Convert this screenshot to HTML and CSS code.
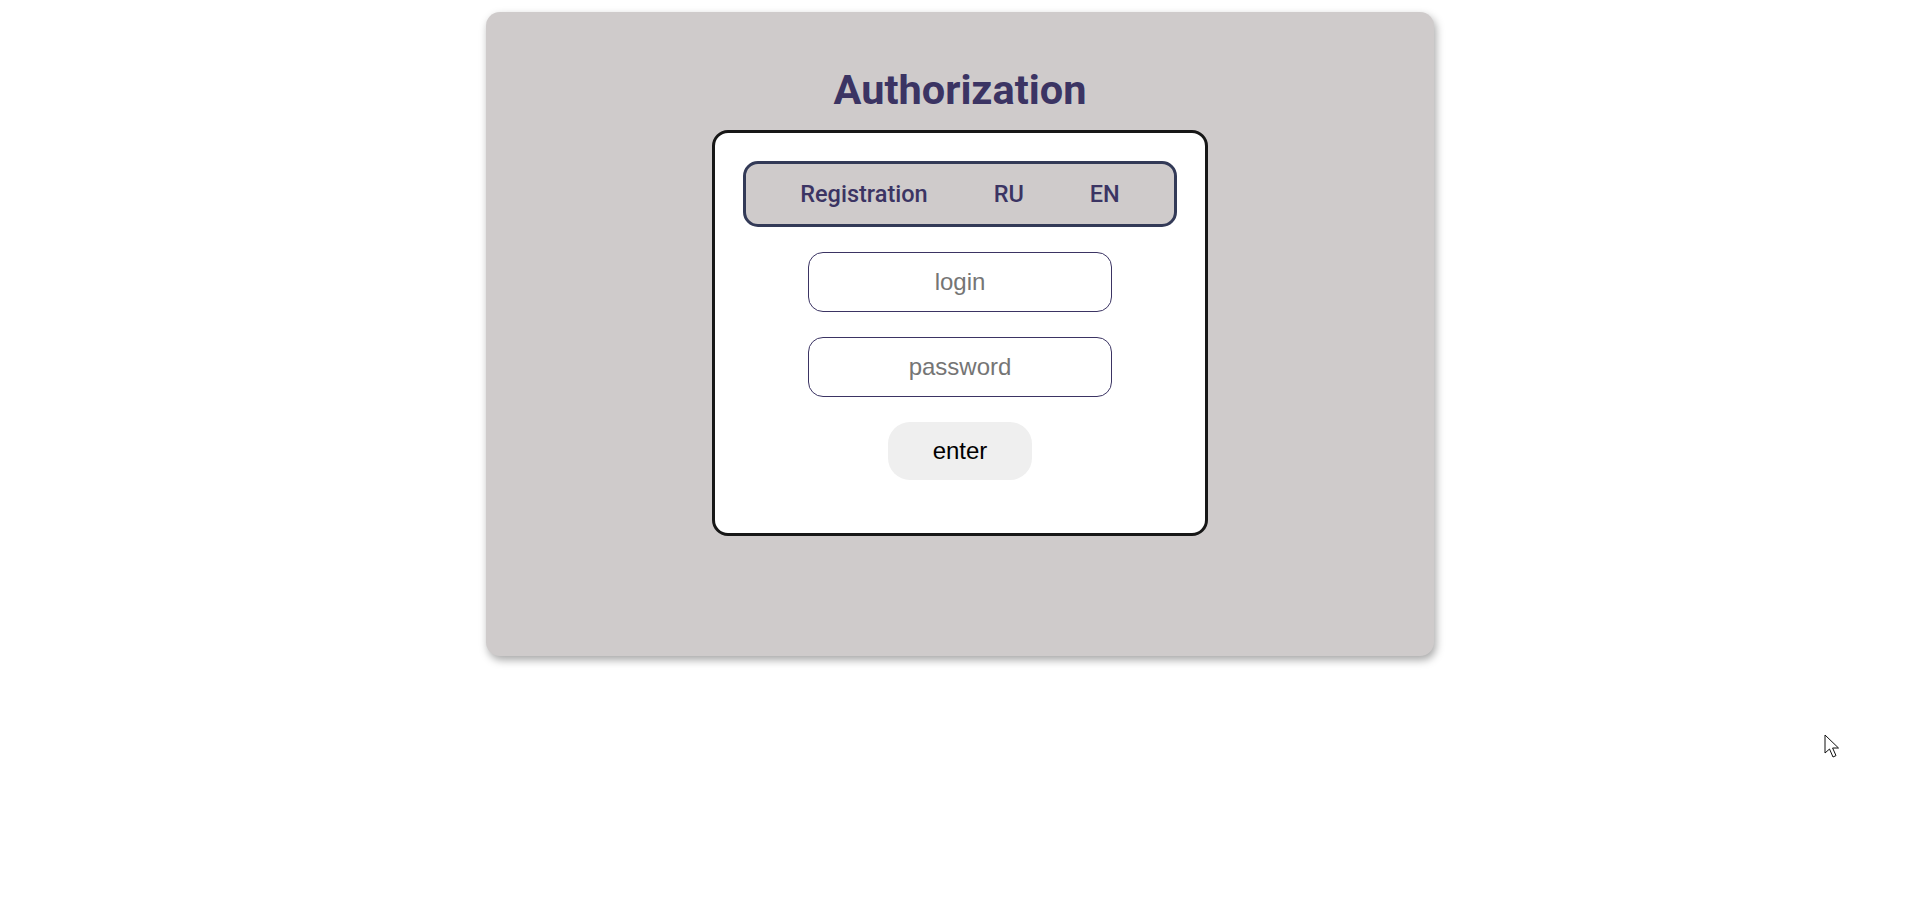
FILE: index.html
```html
<!DOCTYPE html>
<html lang="en">
<head>
<meta charset="utf-8">
<title>Authorization</title>
<link rel="stylesheet" href="styles.css">
</head>
<body>
<main class="card">
  <h1 class="title">Authorization</h1>
  <section class="panel">
    <nav class="nav">
      <a class="nav-item" href="#">Registration</a>
      <a class="nav-item" href="#">RU</a>
      <a class="nav-item" href="#">EN</a>
    </nav>
    <form class="form">
      <input class="field" type="text" placeholder="login">
      <input class="field" type="password" placeholder="password">
      <button class="enter" type="button">enter</button>
    </form>
  </section>
</main>
<svg class="cursor" width="18" height="26" viewBox="0 0 18 26">
  <path d="M1 1 L1 19 L5.5 15 L9 23 L12 21.6 L8.6 14 L14.5 14 Z" fill="#fff" stroke="#111" stroke-width="1" stroke-linejoin="miter"/>
</svg>
</body>
</html>
```
FILE: styles.css
```css
html, body {
  margin: 0;
  padding: 0;
  background: #ffffff;
}
body {
  padding-top: 12px;
  font-family: Roboto, "Liberation Sans", sans-serif;
  min-height: 899px;
  position: relative;
}
.card {
  width: 948px;
  height: 644px;
  margin: 0 auto;
  background: #cfcbcb;
  border-radius: 14px;
  box-shadow: 2px 4px 8px rgba(0, 0, 0, 0.35);
  display: flex;
  flex-direction: column;
  align-items: center;
  box-sizing: border-box;
  padding-top: 53px;
}
.title {
  margin: 0;
  font-family: Roboto, sans-serif;
  font-weight: 700;
  font-size: 41.5px;
  line-height: 49px;
  color: #3b3463;
}
.panel {
  margin-top: 16px;
  width: 496px;
  box-sizing: border-box;
  background: #ffffff;
  border: 3px solid #171717;
  border-radius: 16px;
  padding: 28px 28px 53px;
}
.nav {
  height: 66px;
  box-sizing: border-box;
  border: 3px solid #333a57;
  border-radius: 15px;
  background: #cfcbcb;
  display: flex;
  align-items: center;
  justify-content: center;
  gap: 66px;
}
.nav-item {
  font-family: Roboto, sans-serif;
  font-weight: 500;
  font-size: 23.5px;
  color: #3b3463;
  text-decoration: none;
}
.form {
  margin-top: 25px;
  display: flex;
  flex-direction: column;
  align-items: center;
  gap: 25px;
}
.field {
  width: 304px;
  height: 60px;
  box-sizing: border-box;
  border: 1px solid #3b3463;
  border-radius: 15px;
  background: #ffffff;
  font-family: "Liberation Sans", Arial, sans-serif;
  font-size: 24px;
  text-align: center;
  outline: none;
  padding: 0 10px;
}
.field::placeholder {
  color: #757575;
}
.enter {
  width: 144px;
  height: 58px;
  border: none;
  border-radius: 22px;
  background: #efefef;
  font-family: "Liberation Sans", Arial, sans-serif;
  font-size: 24px;
  color: #000000;
}
.cursor {
  position: absolute;
  left: 1824px;
  top: 734px;
}
```
